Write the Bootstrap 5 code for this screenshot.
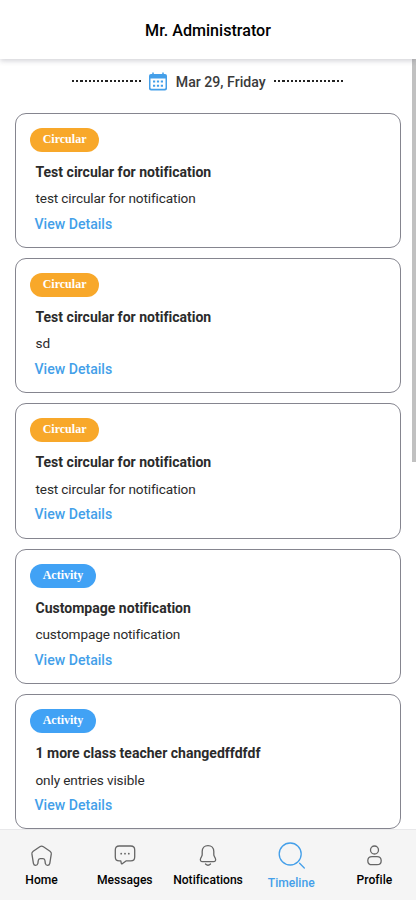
<!DOCTYPE html>
<html lang="en">
<head>
<meta charset="utf-8">
<meta name="viewport" content="width=device-width, initial-scale=1">
<title>Mr. Administrator</title>
<link href="https://cdn.jsdelivr.net/npm/bootstrap@5.3.0/dist/css/bootstrap.min.css" rel="stylesheet">
<style>
body{font-family:Roboto,"Liberation Sans",sans-serif;height:900px;color:#2b2b2b;background:#fff;overflow:hidden;font-variant-ligatures:none}
.topbar{height:58.5px;padding-top:4px;font-size:16.1px;font-weight:500;color:#000;box-shadow:0 2px 5px rgba(60,60,80,.22);z-index:3}
.feed{height:770.5px;z-index:2}
.day-row{height:46px;gap:8.5px;font-size:14.15px;font-weight:500;color:#3a3a3a;padding-right:1px}
.day-row>span:not(.dots){padding-top:2px}
.dots{width:69px;height:2px;margin-top:-1px;background:repeating-linear-gradient(90deg,#222 0 2.2px,transparent 2.2px 4.17px)}
.entries{padding:8px 15.5px 0 15.2px;gap:10.3px}
.entry{height:135.15px;border:1.2px solid #85858f;border-radius:11px;padding:14px 0 0 14px;flex:none}
.tag{height:24px;border-radius:12px;padding:0 12.5px 1px;font:bold 12px/23px "Liberation Serif",serif;color:#fff}
.tag-circular{background:#f8a82a;width:68.5px}
.tag-activity{background:#41a2f5;width:65.5px}
.entry-title{font-size:14.04px;line-height:20px;font-weight:700;margin:10px 0 0 5.3px}
.entry-text{font-size:13.6px;letter-spacing:-.12px;line-height:20px;margin:6.5px 0 0 5.3px}
.entry-link{font-size:14.1px;line-height:20px;font-weight:500;margin:5.5px 0 0 4.3px;color:#449fe9}
.scroll-thumb{position:absolute;right:0;top:0;width:4px;height:403px;background:#c1c1c1}
.tabs{height:71px;background:#f5f5f5;border-top:1px solid #e8e8ea;color:#000;font-size:12.1px;font-weight:500;line-height:16px}
.tabs a{flex:1 1 0;min-width:0;color:inherit;padding-top:14px}
.tabs a.current{color:#449fe9;padding-top:10px}
.tabs svg{fill:none;stroke:#666;stroke-width:1.3;stroke-linecap:round;stroke-linejoin:round;margin-bottom:4px}
.tabs .current svg{stroke:#449fe9;margin-bottom:5px}
</style>
<script src="https://cdn.jsdelivr.net/npm/bootstrap@5.3.0/dist/js/bootstrap.bundle.min.js"></script>
</head>
<body class="d-flex flex-column">
<header class="topbar d-flex align-items-center justify-content-center position-relative flex-shrink-0 bg-white">Mr. Administrator</header>
<main class="feed position-relative flex-shrink-0">
<div class="day-row d-flex align-items-center justify-content-center">
<span class="dots"></span>
<svg width="18" height="19" viewBox="0 0 18 19"><path d="M2 2h14a2 2 0 0 1 2 2v12.500a2 2 0 0 1-2 2H2a2 2 0 0 1-2-2V4a2 2 0 0 1 2-2z" fill="#449fe9"/><path d="M4 .5v2M14 .5v2" stroke="#449fe9" stroke-width="1.500"/><path d="M1.500 6.500h15v9.300a1 1 0 0 1-1 1h-13a1 1 0 0 1-1-1z" fill="#fff"/><path d="M4 9.500h2.200m1.700 0h2.200m1.700 0H14M4 13.700h2.200m1.700 0h2.200m1.700 0H14" stroke="#449fe9" stroke-width="2"/></svg>
<span>Mar 29, Friday</span>
<span class="dots"></span>
</div>
<div class="entries d-flex flex-column">
<article class="entry"><span class="tag tag-circular d-block">Circular</span><h2 class="entry-title">Test circular for notification</h2><p class="entry-text">test circular for notification</p><a class="entry-link d-block text-decoration-none">View Details</a></article>
<article class="entry"><span class="tag tag-circular d-block">Circular</span><h2 class="entry-title">Test circular for notification</h2><p class="entry-text">sd</p><a class="entry-link d-block text-decoration-none">View Details</a></article>
<article class="entry"><span class="tag tag-circular d-block">Circular</span><h2 class="entry-title">Test circular for notification</h2><p class="entry-text">test circular for notification</p><a class="entry-link d-block text-decoration-none">View Details</a></article>
<article class="entry"><span class="tag tag-activity d-block">Activity</span><h2 class="entry-title">Custompage notification</h2><p class="entry-text">custompage notification</p><a class="entry-link d-block text-decoration-none">View Details</a></article>
<article class="entry"><span class="tag tag-activity d-block">Activity</span><h2 class="entry-title">1 more class teacher changedffdfdf</h2><p class="entry-text">only entries visible</p><a class="entry-link d-block text-decoration-none">View Details</a></article>
</div>
<div class="scroll-thumb"></div>
</main>
<nav class="tabs d-flex flex-shrink-0">
<a class="d-flex flex-column align-items-center text-decoration-none"><svg width="24" height="24" viewBox="0.4 0 24 24"><path d="M10.200 2.700Q12 1.500 13.800 2.700L20.400 7.200Q21.900 8.200 21.700 9.900L20.200 19.300Q19.800 21.300 18 21.300Q16.200 21.300 15.700 19.300L15.400 16.800Q15.200 14.700 13.500 14.700H10.500Q8.800 14.700 8.600 16.800L8.300 19.300Q7.800 21.300 6 21.300Q4.200 21.300 3.800 19.300L2.300 9.900Q2.100 8.200 3.600 7.200Z"/></svg>Home</a>
<a class="d-flex flex-column align-items-center text-decoration-none"><svg width="24" height="24" viewBox="0 0 24 24"><path d="M6.200 2H17.800Q21.700 2 21.700 5.900V13Q21.700 16.900 17.800 16.900H13L9.200 19.800Q8.500 20.100 8.300 19.300L7.800 16.900H6.200Q2.300 16.900 2.300 13V5.900Q2.300 2 6.200 2Z"/><path d="M8.200 9.700h.01M12 9.700h.01M15.800 9.700h.01" stroke-width="1.800"/></svg>Messages</a>
<a class="d-flex flex-column align-items-center text-decoration-none"><svg width="24" height="24" viewBox="0 0 24 24"><path d="M12 1.600C8.500 1.600 6.200 4.200 6.200 7.500V10.500Q6.200 11.500 5.600 12.500L4.700 14.300C3.800 16.300 4.700 17.700 6.500 17.700H17.500C19.300 17.700 20.200 16.300 19.300 14.300L18.400 12.500Q17.800 11.500 17.800 10.500V7.500C17.800 4.200 15.500 1.600 12 1.600ZM9.500 20Q12 22.500 14.500 20"/></svg>Notifications</a>
<a class="current d-flex flex-column align-items-center text-decoration-none"><svg width="30" height="30" viewBox="0 0 30 30"><circle cx="14.200" cy="14" r="11"/><path d="m23.600 23.300 4.700 4.700"/></svg>Timeline</a>
<a class="d-flex flex-column align-items-center text-decoration-none"><svg width="24" height="24" viewBox="-0.500 0.300 24 24"><circle cx="12" cy="6.300" r="4"/><path d="M9.500 12.900H14.500Q18.700 12.900 18.700 17Q18.700 21 14.500 21H9.500Q5.300 21 5.300 17Q5.300 12.900 9.500 12.900Z"/></svg>Profile</a>
</nav>
</body>
</html>
